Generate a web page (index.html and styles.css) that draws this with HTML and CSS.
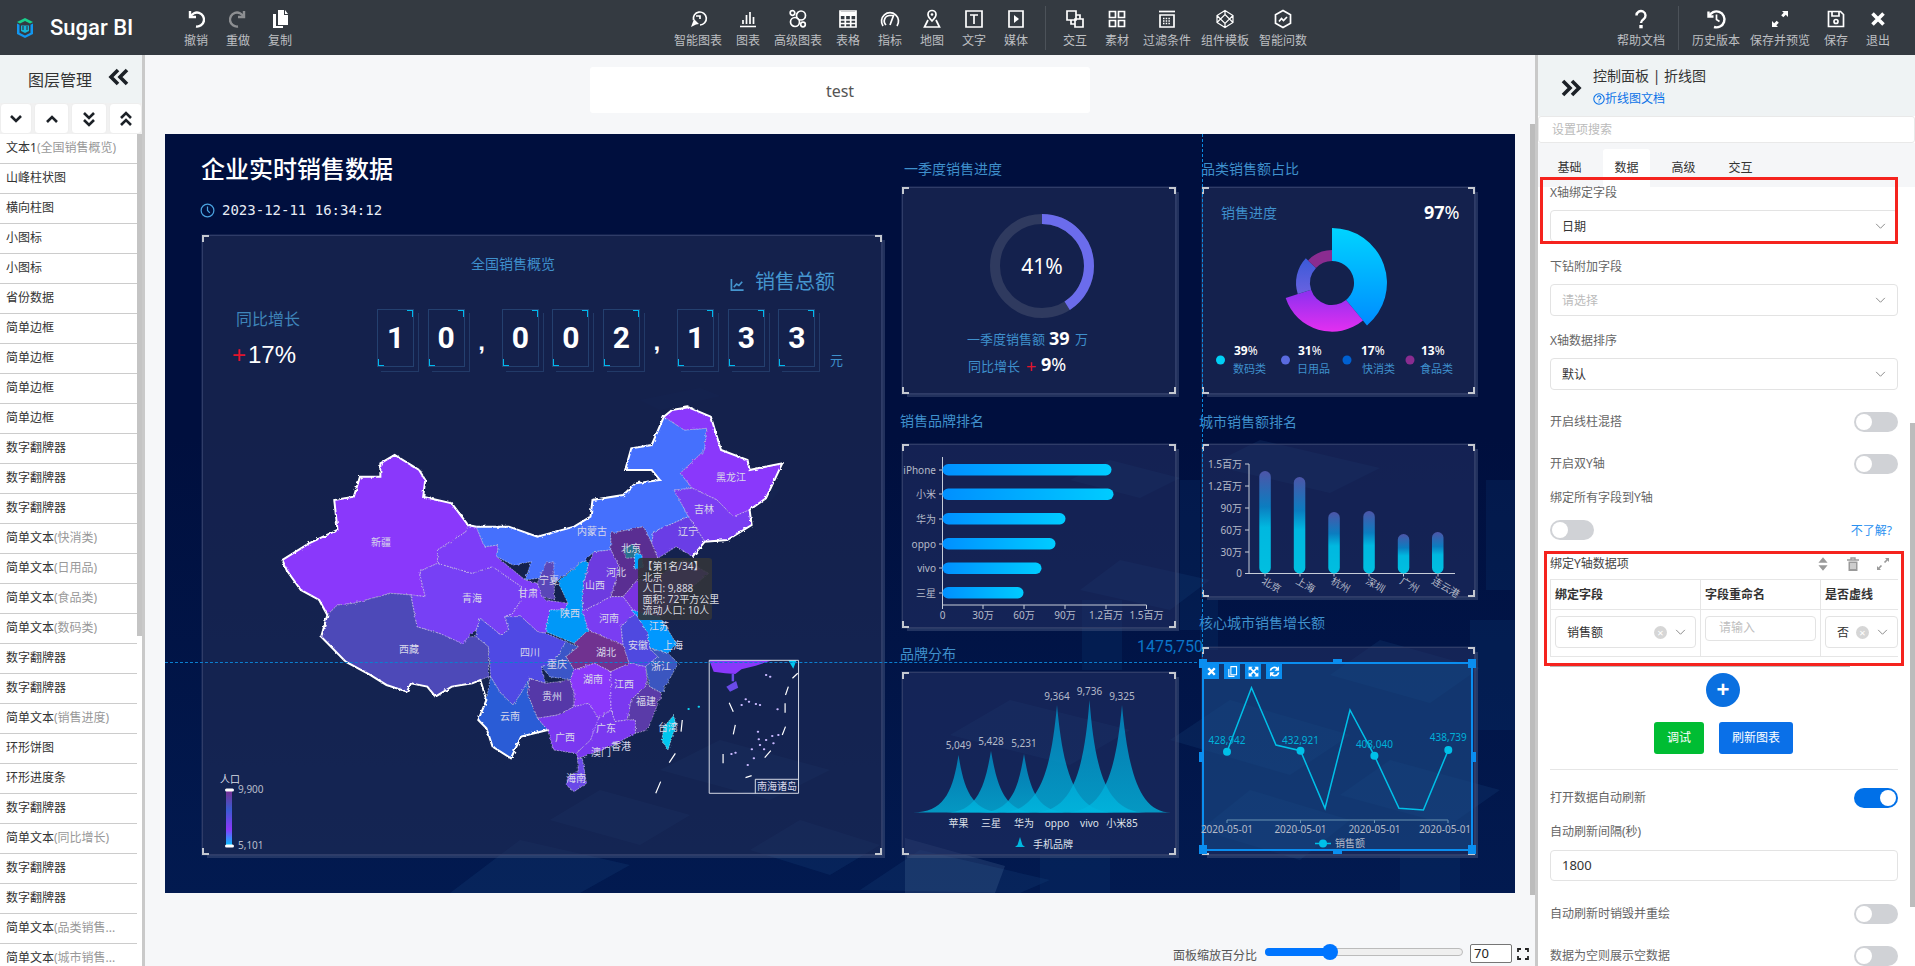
FILE: index.html
```html
<!DOCTYPE html>
<html lang="zh">
<head>
<meta charset="utf-8">
<title>Sugar BI</title>
<link rel="stylesheet" href="styles.css">
</head>
<body>
<header class="topbar">
  <div class="brand">
    <svg class="logo" viewBox="0 0 20 22"><path d="M10 1l8 4-3 1.600L10 4 5 6.600 2 5z" fill="#19d18c"/><path d="M2 6.500l2.500 1.300v8L10 18.500l5.500-2.700v-8L18 6.500v10.500L10 21 2 17z" fill="#1296f0"/><path d="M6 8.500h8v5.500l-4 2-4-2z" fill="#16b4d8"/><path d="M8 9v4M12 9v4" stroke="#343a40" stroke-width="1.200"/></svg>
    <span class="brand-name">Sugar BI</span>
  </div>
  <div class="tools">
    <div class="tool"><svg class="ti" viewBox="0 0 20 20"><path d="M4 2v6h6" class="st"/><path d="M4.500 8A7 7 0 1 1 10 17.500" class="st"/></svg><span>撤销</span></div>
    <div class="tool off"><svg class="ti" viewBox="0 0 20 20"><path d="M16 2v6h-6" class="st"/><path d="M15.500 8A7 7 0 1 0 10 17.500" class="st"/></svg><span>重做</span></div>
    <div class="tool"><svg class="ti" viewBox="0 0 20 20"><path d="M8 1h6v5h4v10H8zM15 1l3 4h-3z" class="fl"/><path d="M6 5H3v14h10v-2H6z" class="fl"/></svg><span>复制</span></div>
  </div>
  <div class="tools tools-mid">
    <div class="tool"><svg class="ti" viewBox="0 0 20 20"><path d="M5.500 11A6.500 6.500 0 1 1 12 16" class="sm"/><path d="M3 18l3-8 5 5-3 .5z" class="fl"/><path d="M8 7h4v3" class="sm"/></svg><span>智能图表</span></div>
    <div class="tool"><svg class="ti" viewBox="0 0 20 20"><path d="M2 17.500h16M5 15v-4M8.500 15V6M12 15V3M15.500 15V8" class="sm"/></svg><span>图表</span></div>
    <div class="tool"><svg class="ti" viewBox="0 0 20 20"><circle cx="4.500" cy="4" r="2.300" class="sm"/><circle cx="15" cy="15.500" r="2.300" class="sm"/><circle cx="7" cy="13" r="4.500" class="sm"/><circle cx="13" cy="6.500" r="4.500" class="sm"/></svg><span>高级图表</span></div>
    <div class="tool"><svg class="ti" viewBox="0 0 20 20"><path d="M2 2h16v16H2z" class="sm"/><path d="M2 3h16v4H2z" class="fl"/><path d="M2 11h16M2 14.500h16M7.300 7v11M12.700 7v11" class="sm"/></svg><span>表格</span></div>
    <div class="tool"><svg class="ti" viewBox="0 0 20 20"><path d="M3 17A8.500 8.500 0 1 1 17 17" class="sm"/><path d="M6 16A5.500 5.500 0 0 1 10 6.500h3.500L10 16" class="sm"/></svg><span>指标</span></div>
    <div class="tool"><svg class="ti" viewBox="0 0 20 20"><path d="M10 12S6 8 6 5.500a4 4 0 0 1 8 0C14 8 10 12 10 12z" class="sm"/><circle cx="10" cy="5.500" r="1.300" class="fl"/><path d="M6 11l-3.500 7h15L14 11" class="sm"/></svg><span>地图</span></div>
    <div class="tool"><svg class="ti" viewBox="0 0 20 20"><path d="M2 2h16v16H2z" class="sm"/><path d="M6 6h8M10 6v9" class="sm"/></svg><span>文字</span></div>
    <div class="tool"><svg class="ti" viewBox="0 0 20 20"><path d="M3 2h14v16H3z" class="sm"/><path d="M8 6l5 4-5 4z" class="fl"/></svg><span>媒体</span></div>
    <i class="divider"></i>
    <div class="tool"><svg class="ti" viewBox="0 0 20 20"><path d="M2 2h9v9H2zM10 10h8v8h-8z" class="sm"/><path d="M6 11v4h4M11 6h4v4" class="sm"/></svg><span>交互</span></div>
    <div class="tool"><svg class="ti" viewBox="0 0 20 20"><path d="M2.500 2.500h6v6h-6zM11.500 2.500h6v6h-6zM2.500 11.500h6v6h-6zM11.500 11.500h6v6h-6z" class="sm"/></svg><span>素材</span></div>
    <div class="tool"><svg class="ti" viewBox="0 0 20 20"><path d="M2 2.500h16" class="sm"/><path d="M3 6h14v12H3z" class="sm"/><path d="M6 9.500h8M6 12h8M6 14.500h8" class="dot"/></svg><span>过滤条件</span></div>
    <div class="tool"><svg class="ti" viewBox="0 0 20 20"><path d="M10 1.500l8 5v7l-8 5-8-5v-7zM10 5.500l4.500 4.500L10 14.500 5.500 10zM10 1.500v4M10 14.500v4M2 6.500L5.500 10 2 13.500M18 6.500L14.500 10l3.500 3.500" class="thin"/></svg><span>组件模板</span></div>
    <div class="tool"><svg class="ti" viewBox="0 0 20 20"><path d="M10 1.500l7.500 4.300v8.400L10 18.500l-7.500-4.300V5.800z" class="sm"/><path d="M6 12.500l2.500-3 2 2L14 8" class="sm"/></svg><span>智能问数</span></div>
  </div>
  <div class="tools tools-right">
    <div class="tool"><svg class="ti" viewBox="0 0 20 20"><path d="M5.500 6.500a4.500 4.500 0 1 1 7 3.700c-1.800 1.200-2.500 2-2.500 3.800" class="st"/><path d="M8.300 16h3.400v3.300H8.300z" class="fl"/></svg><span>帮助文档</span></div>
    <i class="divider"></i>
    <div class="tool"><svg class="ti" viewBox="0 0 20 20"><path d="M2.500 2.500v5h5" class="st"/><path d="M3 7.500A8 8 0 1 1 8 18" class="st"/><path d="M10.500 5.500v5l3 2" class="sm"/></svg><span>历史版本</span></div>
    <div class="tool"><svg class="ti" viewBox="0 0 20 20"><path d="M12 2h6v6l-2.200-2.200-2.500 2.500-2.100-2.100 2.500-2.500zM8 18H2v-6l2.200 2.200 2.500-2.500 2.100 2.100-2.500 2.500z" class="fl"/></svg><span>保存并预览</span></div>
    <div class="tool"><svg class="ti" viewBox="0 0 20 20"><path d="M2.500 2.500h12l3 3v12h-15z" class="sm"/><path d="M6 3v4h7V3" class="sm"/><circle cx="10" cy="12.500" r="2" class="sm"/></svg><span>保存</span></div>
    <div class="tool"><svg class="ti" viewBox="0 0 20 20"><path d="M4.500 4.500l11 11M15.500 4.500l-11 11" class="xl"/></svg><span>退出</span></div>
  </div>
</header>

<main class="workspace">
  <aside class="layers">
    <div class="layers-head"><span>图层管理</span><svg class="dbl" viewBox="0 0 22 18"><path d="M10 2L3 9l7 7M19 2l-7 7 7 7" class="chev"/></svg></div>
    <div class="layer-btns">
      <button class="lb b1"><svg viewBox="0 0 16 16"><path d="M3 5l5 5 5-5" class="chev2"/></svg></button>
      <button class="lb b2"><svg viewBox="0 0 16 16"><path d="M3 11l5-5 5 5" class="chev2"/></svg></button>
      <button class="lb b3"><svg viewBox="0 0 16 16"><path d="M3 2l5 5 5-5M3 9l5 5 5-5" class="chev2"/></svg></button>
      <button class="lb b4"><svg viewBox="0 0 16 16"><path d="M3 7l5-5 5 5M3 14l5-5 5 5" class="chev2"/></svg></button>
    </div>
    <div class="layer-list">
      <div class="layer">文本1<em>(全国销售概览)</em></div>
      <div class="layer">山峰柱状图</div>
      <div class="layer">横向柱图</div>
      <div class="layer">小图标</div>
      <div class="layer">小图标</div>
      <div class="layer">省份数据</div>
      <div class="layer">简单边框</div>
      <div class="layer">简单边框</div>
      <div class="layer">简单边框</div>
      <div class="layer">简单边框</div>
      <div class="layer">数字翻牌器</div>
      <div class="layer">数字翻牌器</div>
      <div class="layer">数字翻牌器</div>
      <div class="layer">简单文本<em>(快消类)</em></div>
      <div class="layer">简单文本<em>(日用品)</em></div>
      <div class="layer">简单文本<em>(食品类)</em></div>
      <div class="layer">简单文本<em>(数码类)</em></div>
      <div class="layer">数字翻牌器</div>
      <div class="layer">数字翻牌器</div>
      <div class="layer">简单文本<em>(销售进度)</em></div>
      <div class="layer">环形饼图</div>
      <div class="layer">环形进度条</div>
      <div class="layer">数字翻牌器</div>
      <div class="layer">简单文本<em>(同比增长)</em></div>
      <div class="layer">数字翻牌器</div>
      <div class="layer">数字翻牌器</div>
      <div class="layer">简单文本<em>(品类销售...</em></div>
      <div class="layer">简单文本<em>(城市销售...</em></div>
      <i class="layer-scroll"></i>
    </div>
  </aside>

  <section class="stage">
    <div class="page-title">test</div>
    <div class="canvas">
      <svg class="city" viewBox="165 134 1350 759" preserveAspectRatio="none">
        <g class="blk">
          <path d="M860 890l60-40 130 30-30 13zM1010 700l120 30-60 35-120-30zM720 740l110 30-60 30-110-30zM600 790l90 25-50 30-90-25zM520 840l110 25-50 28H450zM800 820l80 25-50 30-80-25z"/>
          <path d="M1120 560l90 20-40 30-90-20zM1230 700l120 35-60 40-120-35zM1250 790l100 30-50 40-100-30zM1380 640l100 28-50 35-100-28zM1390 760l110 30-50 35-110-30zM1260 440l120 28-50 25-120-28zM1110 460l70 18-40 20-70-18z"/>
          <path d="M905 838l100 28-10 27H905z" class="pale"/>
          <path d="M1486 480h29v110h-29zM1470 620h45v110h-45zM1082 600h40v70h-40zM1180 480h20v150h-20zM1200 600h18v50h-18zM1400 850h60v43h-60zM1040 850h70v43h-70z" class="tower"/>
          <path d="M700 470l80 20-10 12-80-20zM640 400l60-12 20 8-60 14z" class="faint"/>
        </g>
      </svg>

      <h1 class="board-title">企业实时销售数据</h1>
      <div class="board-time"><svg viewBox="0 0 16 16"><circle cx="8" cy="8" r="6.800"/><path d="M8 3.800V8l2.500 2.600"/></svg>2023-12-11 16:34:12</div>

      <div class="panel p-main">
        <svg class="chart" viewBox="202 235 680 620">
          <defs>
            <filter id="rough" x="-5%" y="-5%" width="110%" height="110%"><feTurbulence type="fractalNoise" baseFrequency="0.09" numOctaves="3" seed="3"/><feDisplacementMap in="SourceGraphic" scale="8"/></filter>
            <linearGradient id="vm" x1="0" y1="0" x2="0" y2="1"><stop offset="0" stop-color="#7a2f92"/><stop offset=".35" stop-color="#3a5ad0"/><stop offset=".7" stop-color="#8a38fb"/><stop offset="1" stop-color="#00c8ff"/></linearGradient>
          </defs>
          <g transform="translate(260 400) scale(.408 .3333)">
            <g filter="url(#rough)">
              <g class="prov">
                <path fill="#8a38fb" d="M55 480L120 430 190 390 182 300 230 290 245 230 295 230 295 190 330 165 390 210 405 240 400 290 470 310 510 375 505 395 435 450 435 490 390 515 405 590 370 585 320 580 230 610 190 615 165 645 145 600 100 570 65 510Z"/>
                <path fill="#4e49b8" d="M165 645L190 615 230 610 320 580 370 585 385 680 440 700 490 710 530 710 560 740 560 830 540 840 520 850 470 860 430 890 410 860 370 850 360 875 310 855 270 825 210 785 150 710Z"/>
                <path fill="#7740f5" d="M390 515L435 490 520 520 570 500 640 560 640 600 620 640 600 650 610 690 590 705 540 655 530 690 495 730 440 700 385 680 370 585 405 590Z"/>
                <path fill="#7d3df8" d="M435 450L505 395 510 375 530 380 550 440 585 435 580 470 650 540 680 550 700 600 755 610 745 630 710 630 700 700 680 695 640 650 600 650 620 640 640 600 640 560 570 500 520 520 435 490Z"/>
                <path fill="#4570fd" d="M530 380L610 380 680 410 770 380 810 350 815 300 890 285 920 250 980 240 960 210 895 210 910 145 960 135 990 50 1040 90 1095 85 1090 150 1030 220 1060 265 1015 270 1050 350 965 395 960 430 940 380 860 400 860 450 820 455 795 480 725 545 680 535 650 540 665 485 620 495 580 470 585 435 550 440Z"/>
                <path fill="#8a38fb" d="M990 50L1010 30 1050 22 1105 50 1130 150 1195 180 1200 210 1280 190 1240 295 1200 330 1160 350 1120 300 1060 265 1030 220 1090 150 1095 85 1040 90Z"/>
                <path fill="#7a3df2" d="M1060 265L1120 300 1160 350 1200 330 1205 375 1145 420 1090 425 1050 350 1015 270Z"/>
                <path fill="#6b3ce6" d="M1050 350L1090 425 1060 470 1020 440 975 475 960 430 965 395Z"/>
                <path fill="#5a2f92" d="M860 400L940 380 960 430 975 475 925 540 890 590 860 590 880 500 860 450Z"/>
                <path fill="#2c6f8e" d="M892 448L912 432 932 450 925 472 897 475Z"/>
                <path fill="#00a0ff" d="M918 462L936 462 938 500 918 508Z"/>
                <path fill="#6d3be0" d="M820 455L860 450 880 500 860 590 790 635 790 570 805 490Z"/>
                <path fill="#7a30e0" d="M890 590L925 540 975 530 1040 480 1100 520 1030 590 985 650 920 640Z"/>
                <path fill="#0098f8" d="M795 480L805 490 790 570 790 635 805 690 770 730 700 695 710 630 745 630 755 610 730 545Z"/>
                <path fill="#5a46b8" d="M700 490L720 485 722 600 690 590 680 548Z"/>
                <path fill="#7a3df2" d="M790 635L860 590 890 590 920 640 885 680 890 735 850 715 805 690Z"/>
                <path fill="#703090" d="M770 730L805 690 850 715 890 735 905 790 860 815 820 790 770 810 750 770 780 740Z"/>
                <path fill="#0098ff" d="M910 630L980 650 1020 730 1000 760 955 745 950 700 935 670Z"/>
                <path fill="#5048e0" d="M920 640L935 670 950 700 955 745 975 770 945 800 905 790 890 735 885 680Z"/>
                <path fill="#3a56c0" d="M955 745L1000 760 1025 790 985 880 955 860 945 800 975 770Z"/>
                <path fill="#4f48e4" d="M530 690L540 655 590 705 610 690 600 650 640 650 680 695 700 700 750 725 720 790 690 800 700 850 660 835 640 880 620 915 590 880 565 830 560 740 530 710Z"/>
                <path fill="#3b57c8" d="M750 725L780 740 750 770 770 810 760 840 710 830 690 800 720 790Z"/>
                <path fill="#5538a8" d="M660 835L700 850 760 840 770 880 770 920 730 945 680 955 655 880Z"/>
                <path fill="#2a5cd6" d="M565 830L590 880 620 915 640 880 660 835 655 880 680 955 705 990 640 1010 615 1075 570 1040 555 985 535 960 555 900Z"/>
                <path fill="#8a38fb" d="M770 810L820 790 860 815 860 930 830 955 805 910 770 920 770 880 760 840Z"/>
                <path fill="#7a38f0" d="M860 815L905 790 945 800 950 850 910 900 900 960 870 965 860 930Z"/>
                <path fill="#5a3aa8" d="M950 850L955 860 985 880 950 990 920 1000 920 960 900 960 910 900Z"/>
                <path fill="#7a38f0" d="M830 955L860 930 870 965 900 960 920 960 920 1000 850 1045 780 1075 775 1060 810 1020 825 960Z"/>
                <path fill="#7a38f0" d="M680 955L730 945 770 920 805 910 830 955 810 1020 775 1060 720 1050 705 990Z"/>
                <path fill="#6a4ae8" d="M778 1075L790 1075 795 1112 800 1150 770 1175 750 1155 755 1130 780 1112Z"/>
                <path fill="#00c8f0" d="M1015 945L1020 970 1000 1050 985 1020 990 980Z"/>
              </g>
              <path class="outline" d="M530 380L610 380 680 410 770 380 810 350 815 300 890 285 920 250 980 240 960 210 895 210 910 145 960 135 990 50 1010 30 1050 22 1105 50 1130 150 1195 180 1200 210 1280 190 1240 295 1200 330 1205 375 1145 420 1090 425 1060 470"/>
              <path class="outline" d="M530 380L510 375 470 310 400 290 405 240 390 210 330 165 295 190 295 230 245 230 230 290 182 300 190 390 120 430 55 480 65 510 100 570 145 600 165 645 150 710 210 785 270 825 310 855 360 875 370 850 410 860 430 890 470 860 520 850 540 840 555 900 535 960 555 985 570 1040 615 1075 640 1010 705 990"/>
            </g>
            <path class="dash" d="M1035 960l-3 35M1018 1060l-15 28M982 1145l-12 35"/>
            <path class="dots cy" d="M1050 927h1M1075 920h1"/>
            <path d="M1101 781H1255L1215 797 1180 808 1165 822 1140 820 1112 815Z" fill="#8a38fb"/>
            <path d="M1295 781h20l-8 25z" fill="#00c8f0"/>
            <path d="M1156 822h6v22h-6z" fill="#6a4ae8"/>
            <path d="M1143 860l24-17 5 20-20 12z" fill="#6a4ae8"/>
            <path class="dash" d="M1150 908l10 27M1295 860l-7 25M1287 910v28M1165 975l-5 28M1288 980l-8 25M1135 1062v28M1252 1052l-15 21M1318 820l-13 15M1190 1133l15-6"/>
            <path class="dots" d="M1180 915h1M1190 898h1M1198 905h1M1215 912h1M1225 915h1M1240 825h1M1250 830h1M1268 928h1M1220 995h1M1222 1018h1M1240 1020h1M1255 1008h1M1270 1005h1M1205 1048h1M1235 1048h1M1195 1095h1M1210 1075h1M1165 1058h1M1155 1062h1M1258 1030h1M1225 1035h1"/>
            <path class="nan-box" d="M1101 781h219v399h-219zM1214 1180v-42h106"/>
          </g>
          <g class="map-labels">
            <text x="381" y="546">新疆</text><text x="472" y="602">青海</text><text x="409" y="653">西藏</text><text x="592" y="535">内蒙古</text><text x="731" y="481">黑龙江</text><text x="704" y="513">吉林</text><text x="688" y="535">辽宁</text><text x="631" y="552">北京</text><text x="616" y="576">河北</text><text x="595" y="589">山西</text><text x="549" y="584">宁夏</text><text x="528" y="597">甘肃</text><text x="570" y="617">陕西</text><text x="609" y="622">河南</text><text x="659" y="630">江苏</text><text x="638" y="649">安徽</text><text x="673" y="649">上海</text><text x="530" y="656">四川</text><text x="606" y="656">湖北</text><text x="557" y="668">重庆</text><text x="661" y="670">浙江</text><text x="593" y="683">湖南</text><text x="624" y="688">江西</text><text x="552" y="700">贵州</text><text x="646" y="705">福建</text><text x="510" y="720">云南</text><text x="668" y="731">台湾</text><text x="606" y="732">广东</text><text x="565" y="741">广西</text><text x="621" y="750">香港</text><text x="601" y="756">澳门</text><text x="576" y="782">海南</text><text x="777" y="790">南海诸岛</text>
          </g>
          <text class="lg" x="230" y="783">人口</text>
          <rect x="226" y="790" width="6" height="56" fill="url(#vm)"/>
          <rect x="225" y="788.500" width="9" height="3" rx="1.500" class="hdl"/><rect x="225" y="844.500" width="9" height="3" rx="1.500" class="hdl"/>
          <text class="lg start" x="238" y="790">9,900</text><text class="lg start" x="238" y="846">5,101</text>
        </svg>
        <div class="maptip">【第1名/34】<br>北京<br>人口: 9,888<br>面积: 72平方公里<br>流动人口: 10人</div>
      </div>

      <div class="ov-title">全国销售概览</div>
      <div class="ov-total"><svg viewBox="0 0 16 16"><path d="M1.500 2v12h13M4 11l3-3.500 2.500 1.500L13 5" /></svg>销售总额</div>
      <div class="ov-yoy">同比增长</div>
      <div class="ov-pct"><b class="plus">+</b>17%</div>
      <div class="digits">
        <span class="d">1</span><span class="d">0</span><span class="cm">,</span><span class="d">0</span><span class="d">0</span><span class="d">2</span><span class="cm">,</span><span class="d">1</span><span class="d">3</span><span class="d">3</span>
      </div>
      <div class="ov-unit">元</div>

      <div class="ttl t1">一季度销售进度</div>
      <div class="ttl t2">品类销售额占比</div>
      <div class="ttl t3">销售品牌排名</div>
      <div class="ttl t4">城市销售额排名</div>
      <div class="ttl t5">核心城市销售增长额</div>
      <div class="ttl t6">品牌分布</div>

      <div class="panel p-a">
        <svg class="chart" viewBox="902 187 274 207">
          <circle cx="1042" cy="266" r="47" class="ring-bg"/>
          <circle cx="1042" cy="266" r="47" class="ring-fg" pathLength="100" stroke-dasharray="41 59" transform="rotate(-90 1042 266)"/>
          <text x="1042" y="274" class="ring-txt">41%</text>
          <text x="967" y="344" class="bl s13">一季度销售额</text>
          <text x="1049" y="345" class="wh b18">39</text>
          <text x="1075" y="344" class="bl s13">万</text>
          <text x="968" y="371" class="bl s13">同比增长</text>
          <text x="1026" y="373" class="red">+</text>
          <text x="1041" y="371" class="wh b18">9<tspan class="thinp">%</tspan></text>
        </svg>
      </div>

      <div class="panel p-b">
        <svg class="chart" viewBox="1202 187 273 207">
          <defs>
            <linearGradient id="s1" x1="0" y1="0" x2="0" y2="1"><stop offset="0" stop-color="#00d4ff"/><stop offset="1" stop-color="#008cff"/></linearGradient>
            <linearGradient id="s2" x1="0" y1="0" x2="0" y2="1"><stop offset="0" stop-color="#8a30f0"/><stop offset="1" stop-color="#e32ff0"/></linearGradient>
            <linearGradient id="s3" x1="0" y1="0" x2="0" y2="1"><stop offset="0" stop-color="#3a5ad8"/><stop offset="1" stop-color="#6a62e0"/></linearGradient>
          </defs>
          <text x="1221" y="218" class="bl s14">销售进度</text>
          <text x="1424" y="219" class="wh b18">97<tspan class="thinp">%</tspan></text>
          <path fill="url(#s1)" d="M1332 228A55 55 0 0 1 1367 325.400L1346 300A22 22 0 0 0 1332 261Z"/>
          <path fill="url(#s2)" d="M1363 320.500A48.700 48.700 0 0 1 1285.700 298L1311.100 289.800A22 22 0 0 0 1346 300Z"/>
          <path fill="url(#s3)" d="M1297.800 294.100A36 36 0 0 1 1305.800 258.300L1316 268A22 22 0 0 0 1311.100 289.800Z"/>
          <path fill="#8a2c90" d="M1308 260.400A33 33 0 0 1 1332 250L1332 261A22 22 0 0 0 1316 268Z"/>
          <circle cx="1220.500" cy="360" r="4.500" fill="#00d0f5"/><circle cx="1285.500" cy="360" r="4.500" fill="#5a6be0"/><circle cx="1347" cy="360" r="4.500" fill="#0060d0"/><circle cx="1410" cy="360" r="4.500" fill="#8a2c90"/>
          <text x="1234" y="355" class="wh b12">39<tspan class="thinp">%</tspan></text><text x="1298" y="355" class="wh b12">31<tspan class="thinp">%</tspan></text><text x="1361" y="355" class="wh b12">17<tspan class="thinp">%</tspan></text><text x="1421" y="355" class="wh b12">13<tspan class="thinp">%</tspan></text>
          <text x="1233" y="373" class="bl s11">数码类</text><text x="1297" y="373" class="bl s11">日用品</text><text x="1362" y="373" class="bl s11">快消类</text><text x="1420" y="373" class="bl s11">食品类</text>
        </svg>
      </div>

      <div class="panel p-c">
        <svg class="chart" viewBox="902 444 274 184">
          <defs><linearGradient id="hb"><stop offset="0" stop-color="#0090ff"/><stop offset="1" stop-color="#00ccff"/></linearGradient></defs>
          <path class="axis" d="M942.500 457V605H1146.500M942.500 605v4M983 605v4M1024 605v4M1065 605v4M1106 605v4M1146.500 605v4M939 470h3.500M939 494h3.500M939 519h3.500M939 544h3.500M939 568h3.500M939 593h3.500"/>
          <rect x="942.500" y="464" width="169" height="11.500" rx="5.700" fill="url(#hb)"/><rect x="942.500" y="488.500" width="171" height="11.500" rx="5.700" fill="url(#hb)"/><rect x="942.500" y="513" width="123" height="11.500" rx="5.700" fill="url(#hb)"/><rect x="942.500" y="538" width="113" height="11.500" rx="5.700" fill="url(#hb)"/><rect x="942.500" y="562.500" width="99" height="11.500" rx="5.700" fill="url(#hb)"/><rect x="942.500" y="587" width="81" height="11.500" rx="5.700" fill="url(#hb)"/>
          <g class="ax-l end"><text x="936" y="473.500">iPhone</text><text x="936" y="498">小米</text><text x="936" y="523">华为</text><text x="936" y="547.500">oppo</text><text x="936" y="572">vivo</text><text x="936" y="596.500">三星</text></g>
          <g class="ax-l mid"><text x="942.500" y="619">0</text><text x="983" y="619">30万</text><text x="1024" y="619">60万</text><text x="1065" y="619">90万</text><text x="1106" y="619">1.2百万</text><text x="1146.500" y="619">1.5百万</text></g>
        </svg>
      </div>

      <div class="panel p-d">
        <svg class="chart" viewBox="1202 444 273 153">
          <defs><linearGradient id="vb" x1="0" y1="0" x2="0" y2="1"><stop offset="0" stop-color="#4d55a8"/><stop offset=".35" stop-color="#0b7dc0"/><stop offset=".55" stop-color="#00b8e0"/><stop offset="1" stop-color="#00bfe0"/></linearGradient></defs>
          <path class="axis" d="M1249 464V573.500H1455M1245 464h4M1245 486h4M1245 508h4M1245 530h4M1245 552h4M1245 573.500h4M1265 573.500v3M1300 573.500v3M1334 573.500v3M1369 573.500v3M1403.500 573.500v3M1438 573.500v3"/>
          <rect x="1259.300" y="471" width="11.500" height="102.500" rx="5.700" fill="url(#vb)"/><rect x="1293.800" y="477" width="11.500" height="96.500" rx="5.700" fill="url(#vb)"/><rect x="1328.300" y="512" width="11.500" height="61.500" rx="5.700" fill="url(#vb)"/><rect x="1363.300" y="511" width="11.500" height="62.500" rx="5.700" fill="url(#vb)"/><rect x="1397.800" y="534" width="11.500" height="39.500" rx="5.700" fill="url(#vb)"/><rect x="1432" y="532" width="11.500" height="41.500" rx="5.700" fill="url(#vb)"/>
          <g class="ax-l end"><text x="1242" y="468">1.5百万</text><text x="1242" y="490">1.2百万</text><text x="1242" y="512">90万</text><text x="1242" y="534">60万</text><text x="1242" y="556">30万</text><text x="1242" y="577">0</text></g>
          <g class="ax-l"><text transform="translate(1261 583) rotate(30)">北京</text><text transform="translate(1295 583) rotate(30)">上海</text><text transform="translate(1330 583) rotate(30)">杭州</text><text transform="translate(1365 583) rotate(30)">深圳</text><text transform="translate(1399 583) rotate(30)">广州</text><text transform="translate(1431 583) rotate(30)">连云港</text></g>
        </svg>
      </div>

      <div class="panel p-e">
        <svg class="chart" viewBox="902 672 274 183">
          <defs><linearGradient id="pk" x1="0" y1="0" x2="0" y2="1"><stop offset="0" stop-color="#0090c8"/><stop offset="1" stop-color="#00b8e0"/></linearGradient></defs>
          <g fill="url(#pk)" fill-opacity=".78">
            <path d="M913 812.500C945 812.500 953 790 958.500 755 964 790 972 812.500 1004 812.500Z"/>
            <path d="M946 812.500C978 812.500 985 785 991 751 997 785 1004 812.500 1036 812.500Z"/>
            <path d="M979 812.500C1011 812.500 1018 790 1024 754 1030 790 1037 812.500 1069 812.500Z"/>
            <path d="M1000 812.500C1040 812.500 1051 770 1057 705 1063 770 1074 812.500 1114 812.500Z"/>
            <path d="M1033 812.500C1073 812.500 1084 770 1089.500 700 1095 770 1106 812.500 1146 812.500Z"/>
            <path d="M1065 812.500C1105 812.500 1116 770 1122 705 1128 770 1139 812.500 1171 812.500Z"/>
          </g>
          <g class="ax-l mid">
            <text x="958.500" y="749">5,049</text><text x="991" y="745">5,428</text><text x="1024" y="747">5,231</text><text x="1057" y="700">9,364</text><text x="1089.500" y="695">9,736</text><text x="1122" y="700">9,325</text>
          </g>
          <g class="ax-l mid lite"><text x="958.500" y="827">苹果</text><text x="991" y="827">三星</text><text x="1024" y="827">华为</text><text x="1057" y="827">oppo</text><text x="1089.500" y="827">vivo</text><text x="1122" y="827">小米85</text></g>
          <path d="M1020 837l2.500 8 2.500 2h-10l2.500-2z" fill="#00b8e0"/>
          <text x="1033" y="848" class="ax-l lite">手机品牌</text>
        </svg>
      </div>

      <div class="panel p-f"></div>

      <i class="guide-h"></i><i class="guide-v"></i>
      <div class="guide-val">1475,750</div>

      <div class="selected">
        <svg class="chart" viewBox="1202 662 271 189">
          <path class="line" d="M1227 751.700L1251.500 687.700 1276 745 1300.500 750.700 1325 808.300 1350 710 1374.400 755.700 1399 808.300 1423.400 810 1448.300 750"/>
          <g class="pts"><circle cx="1227" cy="751.700" r="4"/><circle cx="1300.500" cy="750.700" r="4"/><circle cx="1374.400" cy="755.700" r="4"/><circle cx="1448.300" cy="750" r="4"/></g>
          <g class="pt-l"><text x="1227" y="744">428,942</text><text x="1300.500" y="744">432,921</text><text x="1374.400" y="748">408,040</text><text x="1448.300" y="741">438,739</text></g>
          <path class="axis dim" d="M1227 820H1448M1227 820v3M1300.500 820v3M1374.500 820v3M1448 820v3"/>
          <g class="ax-l mid"><text x="1227" y="833">2020-05-01</text><text x="1300.500" y="833">2020-05-01</text><text x="1374.500" y="833">2020-05-01</text><text x="1445" y="833">2020-05-01</text></g>
          <path class="line" d="M1315 843.500h16"/><circle cx="1323" cy="843.500" r="4" class="pt-leg"/>
          <text x="1335" y="847" class="ax-l">销售额</text>
        </svg>
        <div class="sel-tools">
          <span class="st-b"><svg viewBox="0 0 16 16"><path d="M4 4l8 8M12 4l-8 8" class="w3"/></svg></span>
          <span class="st-b"><svg viewBox="0 0 16 16"><path d="M6 2h7v10H6zM3.500 5v9h7" class="w1"/></svg></span>
          <span class="st-b"><svg viewBox="0 0 16 16"><path d="M3 3l10 10M13 3L3 13" class="w2"/><path d="M2 2h5L2 7zM14 2v5L9 2zM2 14V9l5 5zM14 14H9l5-5z" fill="#fff"/></svg></span>
          <span class="st-b"><svg viewBox="0 0 16 16"><path d="M3 7a5 5 0 0 1 9-2M13 9a5 5 0 0 1-9 2" class="w2"/><path d="M13.500 1.500V7H8zM2.500 14.500V9H8z" fill="#fff"/></svg></span>
        </div>
        <i class="h tl"></i><i class="h tm"></i><i class="h tr"></i><i class="h ml"></i><i class="h mr"></i><i class="h bl2"></i><i class="h bm"></i><i class="h br"></i>
      </div>
    </div>
    <div class="zoombar">
      <span class="zoom-label">面板缩放百分比</span>
      <div class="slider"><i class="slider-fill"></i><i class="slider-thumb"></i></div>
      <div class="zoom-input">70</div>
      <svg class="fs" viewBox="0 0 12 12"><path d="M1 4V1h3M8 1h3v3M11 8v3H8M4 11H1V8"/></svg>
    </div>
    <i class="stage-scroll"></i>
  </section>

  <aside class="props">
    <div class="props-head">
      <svg class="dbl2" viewBox="0 0 22 18"><path d="M3 2l7 7-7 7M12 2l7 7-7 7" class="chev"/></svg>
      <div class="props-head-text">
        <div class="props-title">控制面板 | 折线图</div>
        <div class="props-link"><svg viewBox="0 0 12 12"><circle cx="6" cy="6" r="5.200"/><path d="M4.300 4.600a1.800 1.800 0 1 1 2.500 1.700c-.6.300-.8.600-.8 1.200M6 8.600v1"/></svg>折线图文档</div>
      </div>
    </div>
    <div class="props-search">设置项搜索</div>
    <div class="tabs"><span class="tab">基础</span><span class="tab on">数据</span><span class="tab">高级</span><span class="tab">交互</span></div>
    <div class="form">
      <div class="f-label">X轴绑定字段</div>
      <div class="sel"><span>日期</span><svg class="caret" viewBox="0 0 12 8"><path d="M1 1l5 5 5-5"/></svg></div>
      <div class="f-label gap">下钻附加字段</div>
      <div class="sel ph"><span>请选择</span><svg class="caret" viewBox="0 0 12 8"><path d="M1 1l5 5 5-5"/></svg></div>
      <div class="f-label gap">X轴数据排序</div>
      <div class="sel"><span>默认</span><svg class="caret" viewBox="0 0 12 8"><path d="M1 1l5 5 5-5"/></svg></div>
      <div class="row r22"><span class="f-label">开启线柱混搭</span><i class="sw"></i></div>
      <div class="row r22"><span class="f-label">开启双Y轴</span><i class="sw"></i></div>
      <div class="f-label r15">绑定所有字段到Y轴</div>
      <div class="row r13"><i class="sw"></i><a class="know">不了解?</a></div>
      <div class="row y-title"><span class="f-label dark">绑定Y轴数据项</span>
        <span class="y-icons">
          <svg viewBox="0 0 10 14"><path d="M5 1l4 5H1zM5 13L1 8h8z" class="g-fill"/></svg>
          <svg viewBox="0 0 14 14"><path d="M1 3h12M5 3V1h4v2" class="g-st"/><path d="M2.500 4.500h9V14h-9z" class="g-fill"/><path d="M5 6v6M7 6v6M9 6v6" class="g-w"/></svg>
          <svg viewBox="0 0 14 14"><path d="M9 1h4v4l-1.400-1.400-2.500 2.500-1.200-1.200 2.500-2.500zM5 13H1V9l1.400 1.400 2.500-2.500 1.200 1.200-2.500 2.500z" class="g-fill"/></svg>
        </span>
      </div>
      <div class="ytable">
        <div class="th">绑定字段</div><div class="th">字段重命名</div><div class="th">是否虚线</div>
        <div class="td"><div class="sel sm c1"><span>销售额</span><i class="clr">×</i><svg class="caret" viewBox="0 0 12 8"><path d="M1 1l5 5 5-5"/></svg></div></div>
        <div class="td"><div class="inp">请输入</div></div>
        <div class="td"><div class="sel sm c3"><span>否</span><i class="clr">×</i><svg class="caret" viewBox="0 0 12 8"><path d="M1 1l5 5 5-5"/></svg></div></div>
      </div>
      <div class="y-scroll"></div>
      <div class="plus-btn">+</div>
      <div class="btns"><span class="btn green">调试</span><span class="btn blue">刷新图表</span></div>
      <hr class="sep">
      <div class="row"><span class="f-label">打开数据自动刷新</span><i class="sw on"></i></div>
      <div class="f-label r15 mb9">自动刷新间隔(秒)</div>
      <div class="num">1800</div>
      <div class="row r23"><span class="f-label">自动刷新时销毁并重绘</span><i class="sw"></i></div>
      <div class="row r22"><span class="f-label">数据为空则展示空数据</span><i class="sw"></i></div>
    </div>
    <i class="redbox box1"></i><i class="redbox box2"></i>
    <i class="props-scroll"></i>
  </aside>
</main>
</body>
</html>
```
FILE: styles.css
```css
* { box-sizing: border-box; }
html, body { margin: 0; height: 100%; }
body {
  width: 1915px; height: 966px; overflow: hidden;
  display: flex; flex-direction: column;
  font-family: "Noto Sans", "Noto Sans CJK SC", sans-serif;
  font-size: 12px; color: #333; background: #f6f7f9;
}
i { font-style: normal; display: block; }

/* top bar */
.topbar { height: 55px; flex: none; background: #343a41; display: flex; align-items: stretch; color: #bdbfc2; }
.brand { width: 175px; flex: none; display: flex; align-items: center; padding-left: 15px; }
.logo { width: 20px; height: 22px; }
.brand-name { margin-left: 15px; font: 500 22px/1 Roboto, sans-serif; color: #fff; }
.tools { display: flex; align-items: center; }
.tools-mid { margin-left: 368px; }
.tools-right { margin-left: auto; padding-right: 16px; }
.tool { min-width: 42px; padding: 9px 5px 0; height: 55px; display: flex; flex-direction: column; align-items: center; justify-content: flex-start; line-height: 16px; white-space: nowrap; }
.ti { width: 20px; height: 20px; margin-bottom: 4px; color: #fff; overflow: visible; }
.tool.off .ti { color: #8d8f92; }
.divider { width: 1px; height: 44px; background: #4c5259; margin: 0 8px; }
.st, .sm, .xl, .thin, .dot { fill: none; stroke: currentColor; }
.st { stroke-width: 2.400; }
.sm { stroke-width: 1.700; }
.thin { stroke-width: 1.200; }
.xl { stroke-width: 3.600; }
.dot { stroke-width: 1.400; stroke-dasharray: 1.500 1.200; }
.fl { fill: currentColor; }

/* workspace */
.workspace { flex: 1; display: flex; min-height: 0; }

/* layers */
.layers { width: 145px; flex: none; border-right: 3px solid #c9c9c9; background: #fff; display: flex; flex-direction: column; overflow: hidden; }
.layers-head { height: 48px; flex: none; background: #eff3f4; display: flex; align-items: center; padding-left: 28px; font-size: 16px; color: #333; position: relative; }
.dbl { width: 22px; height: 18px; margin-left: 16px; margin-top: -4px; }
.chev { fill: none; stroke: #1c2127; stroke-width: 3.600; }
.layer-btns { height: 31px; flex: none; display: flex; gap: 2px; background: #f1f1f1; }
.lb { height: 31px; padding: 0; border: 1px solid #eee; border-radius: 4px; background: #fff; display: flex; align-items: center; justify-content: center; }
.lb svg { width: 16px; height: 16px; }
.b1 { width: 32px; } .b2 { width: 35px; } .b3 { width: 36px; } .b4 { width: 33px; }
.chev2 { fill: none; stroke: #1c2127; stroke-width: 2.600; }
.layer-list { flex: 1; position: relative; overflow: hidden; }
.layer { height: 30px; border-bottom: 1px solid #ccc; padding-left: 6px; line-height: 28px; color: #333; white-space: nowrap; margin-right: 5px; }
.layer em { font-style: normal; color: #999; }
.layer-scroll { position: absolute; right: 0; top: 0; width: 5px; height: 502px; background: #c4c4c4; }

/* stage */
.stage { flex: 1; min-width: 0; position: relative; display: flex; flex-direction: column; align-items: center; }
.stage-scroll { position: absolute; right: 0; top: 69px; width: 5px; height: 771px; background: #bcbcbc; }
.page-title { width: 500px; height: 46px; margin-top: 12px; background: #fff; border-radius: 3px; text-align: center; font-size: 16px; line-height: 49px; color: #555; flex: none; }
.canvas { width: 1350px; height: 759px; margin-top: 21px; flex: none; position: relative; overflow: hidden; background: linear-gradient(180deg, #000f3e 0, #000f3e 40%, #021a50 100%); color: #fff; }
.zoombar { align-self: flex-end; margin-top: 51px; height: 19px; display: flex; align-items: center; padding-right: 6px; font-size: 12px; color: #555; }
.zoom-label { margin-right: 8px; position: relative; top: 1px; }
.slider { width: 198px; height: 8px; background: #efefef; border: 1px solid #bbb; border-radius: 4px; position: relative; top: -2px; }
.slider-fill { position: absolute; left: -1px; top: -1px; height: 8px; width: 65px; background: #0075ff; border-radius: 4px 0 0 4px; }
.slider-thumb { position: absolute; left: 56px; top: -5px; width: 16px; height: 16px; border-radius: 50%; background: #0075ff; }
.zoom-input { width: 42px; height: 19px; margin-left: 7px; border: 1px solid #767676; border-radius: 2px; background: #fff; font-size: 13px; line-height: 17px; padding-left: 3px; color: #222; }
.fs { width: 12px; height: 12px; margin-left: 5px; fill: none; stroke: #222; stroke-width: 1.800; }

/* canvas */
.city { position: absolute; inset: 0; width: 100%; height: 100%; }
.blk path { fill: #2f6aa8; fill-opacity: .13; }
.blk .pale { fill: #7aa0c8; fill-opacity: .16; }
.blk .tower { fill: #0d3f7c; fill-opacity: .2; }
.blk .faint { fill-opacity: .05; }
.board-title { position: absolute; left: 36px; top: 18px; margin: 0; font-size: 24px; line-height: 34px; font-weight: 500; color: #fff; }
.board-time { position: absolute; left: 35px; top: 67px; display: flex; align-items: center; gap: 7px; font: 14px/18px "DejaVu Sans Mono", monospace; color: #e8edf6; }
.board-time svg { width: 15px; height: 15px; fill: none; stroke: #4aa3e0; stroke-width: 1.300; }
.panel { position: absolute; background: rgba(36, 50, 100, .55); box-shadow: inset 0 0 0 1px #2f3c68, 0 0 0 1px rgba(70, 85, 125, .25), 4px 4px 0 -1px rgba(75, 90, 130, .45); }
.panel::after { content: ""; position: absolute; inset: 0; pointer-events: none;
  background:
    linear-gradient(#c4c8d0, #c4c8d0) left top / 7px 2px no-repeat, linear-gradient(#c4c8d0, #c4c8d0) left top / 2px 7px no-repeat,
    linear-gradient(#c4c8d0, #c4c8d0) right top / 7px 2px no-repeat, linear-gradient(#c4c8d0, #c4c8d0) right top / 2px 7px no-repeat,
    linear-gradient(#c4c8d0, #c4c8d0) left bottom / 7px 2px no-repeat, linear-gradient(#c4c8d0, #c4c8d0) left bottom / 2px 7px no-repeat,
    linear-gradient(#c4c8d0, #c4c8d0) right bottom / 7px 2px no-repeat, linear-gradient(#c4c8d0, #c4c8d0) right bottom / 2px 7px no-repeat; }
.p-main { left: 37px; top: 101px; width: 680px; height: 620px; background: rgba(33, 45, 87, .6); }
.p-a { left: 737px; top: 53px; width: 274px; height: 207px; background: #14214d; }
.p-b { left: 1037px; top: 53px; width: 273px; height: 207px; background: #14214d; }
.p-c { left: 737px; top: 310px; width: 274px; height: 184px; }
.p-d { left: 1037px; top: 310px; width: 273px; height: 153px; }
.p-e { left: 737px; top: 538px; width: 274px; height: 183px; }
.p-f { left: 1037px; top: 513px; width: 273px; height: 208px; }
.chart { position: absolute; inset: 0; width: 100%; height: 100%; overflow: visible; }
.chart text { font-family: "Noto Sans", "Noto Sans CJK SC", sans-serif; }

.prov path { stroke: rgba(255, 255, 255, .75); stroke-width: .6; stroke-dasharray: 2 1; vector-effect: non-scaling-stroke; }
.outline { fill: none; stroke: #fff; stroke-width: 2; vector-effect: non-scaling-stroke; }
.dash { fill: none; stroke: #fff; stroke-width: 1.200; vector-effect: non-scaling-stroke; }
.dots { fill: none; stroke: #c8b8ff; stroke-width: 2; stroke-linecap: round; vector-effect: non-scaling-stroke; }
.dots.cy { stroke: #10d0f0; }
.nan-box { fill: none; stroke: #d6dbe6; stroke-width: 1; vector-effect: non-scaling-stroke; }
.map-labels text { font-size: 10px; fill: #d8d8ea; text-anchor: middle; }
.lg { font-size: 10px; fill: #d8dce6; text-anchor: middle; }
.lg.start { text-anchor: start; dominant-baseline: middle; fill: #b8bdca; }
.hdl { fill: #fff; }
.maptip { position: absolute; left: 435.500px; top: 323px; width: 74px; height: 62px; padding: 3px 0 0 5px; background: rgba(50, 52, 58, .9); border-radius: 3px; font-size: 10px; line-height: 11px; color: #d9dbe0; white-space: nowrap; }

.ov-title { position: absolute; left: 306px; top: 120px; font-size: 14px; line-height: 20px; color: #3f90cc; }
.ov-total { position: absolute; left: 565px; top: 134px; display: flex; align-items: center; gap: 10px; font-size: 20px; line-height: 28px; color: #4596cf; }
.ov-total svg { width: 15px; height: 15px; fill: none; stroke: #4596cf; stroke-width: 1.800; margin-top: 4px; }
.ov-yoy { position: absolute; left: 71px; top: 174px; font-size: 16px; line-height: 22px; color: #3f85ba; }
.ov-pct { position: absolute; left: 67px; top: 205px; font: 24px/32px "Liberation Sans", sans-serif; color: #fff; display: flex; align-items: center; }
.plus { font-weight: 400; color: #e0142c; font-size: 24px; margin-right: 2px; }
.digits { position: absolute; left: 212px; top: 175px; display: flex; gap: 13.600px; }
.d { width: 37px; height: 58px; position: relative; text-align: center; font: 700 30px/56px Roboto, sans-serif; color: #fff; border: 1px solid #24406f;
  background:
    linear-gradient(#00b8ee, #00b8ee) right top / 7px 2px no-repeat, linear-gradient(#00b8ee, #00b8ee) right top / 2px 8px no-repeat,
    linear-gradient(#00b8ee, #00b8ee) left bottom / 7px 2px no-repeat, linear-gradient(#00b8ee, #00b8ee) left bottom / 2px 8px no-repeat; background-origin: border-box; }
.d::after { content: ""; position: absolute; left: 3px; top: 3px; width: 37px; height: 58px; border-right: 1px solid #223a68; border-bottom: 1px solid #223a68; }
.cm { width: 10px; font: 700 24px/66px "Liberation Sans", sans-serif; color: #fff; }
.ov-unit { position: absolute; left: 665px; top: 217px; font-size: 13px; line-height: 18px; color: #3f90cc; }

.ttl { position: absolute; font-size: 14px; line-height: 20px; color: #3f90cc; white-space: nowrap; }
.t1 { left: 739px; top: 25px; }
.t2 { left: 1036px; top: 25px; }
.t3 { left: 735px; top: 277px; }
.t4 { left: 1034px; top: 278px; }
.t5 { left: 1034px; top: 479px; }
.t6 { left: 735px; top: 510px; }

.ring-bg { fill: none; stroke: #2f3a5f; stroke-width: 10; }
.ring-fg { fill: none; stroke: #6b6cec; stroke-width: 10; }
.ring-txt { font-size: 21px; fill: #fff; text-anchor: middle; }
.bl { fill: #3f90cc; }
.s13 { font-size: 13px; } .s14 { font-size: 14px; } .s11 { font-size: 11px; }
.wh { fill: #fff; }
.b18 { font-size: 18px; font-weight: 700; }
.b12 { font-size: 12px; font-weight: 700; }
.thinp { font-weight: 400; }
.red { fill: #e0142c; font-size: 18px; }
.axis { fill: none; stroke: #c7cdd8; stroke-width: 1; }
.axis.dim { stroke: #6b94b2; }
.ax-l { font-size: 10px; fill: #b4bac8; }
.ax-l text { fill: #b4bac8; }
.ax-l.end { text-anchor: end; }
.ax-l.mid { text-anchor: middle; }
.ax-l.lite text, text.ax-l.lite { fill: #dfe2ea; }

.guide-h { position: absolute; left: 0; top: 528px; width: 1037px; border-top: 1px dashed #0a7fd0; }
.guide-v { position: absolute; left: 1037px; top: 0; height: 528px; border-left: 1px dashed #0a8ae0; }
.guide-val { position: absolute; left: 972px; top: 502px; font: 16px/22px Roboto, sans-serif; color: #0a76c8; }
.selected { position: absolute; left: 1037px; top: 528px; width: 271px; height: 189px; background: rgba(10, 130, 210, .2); box-shadow: inset 0 0 0 2px #0a8ef0; }
.line { fill: none; stroke: #00c0e8; stroke-width: 1.500; }
.pts circle, .pt-leg { fill: #00c0e8; }
.pt-l text { font-size: 10px; fill: #00b0d8; text-anchor: middle; }
.sel-tools { position: absolute; left: 1px; top: 2px; display: flex; gap: 5px; }
.st-b { width: 16px; height: 15px; background: #0a8ef0; display: flex; align-items: center; justify-content: center; }
.st-b svg { width: 13px; height: 13px; }
.w3 { fill: none; stroke: #fff; stroke-width: 3; }
.w2 { fill: none; stroke: #fff; stroke-width: 2; }
.w1 { fill: none; stroke: #fff; stroke-width: 1.300; }
.h { position: absolute; background: #0a8ef0; }
.tl, .tr, .bl2, .br { width: 8px; height: 9px; }
.tl { left: -3px; top: -3px; } .tr { right: -3px; top: -3px; } .bl2 { left: -3px; bottom: -3px; } .br { right: -3px; bottom: -3px; }
.tm, .bm { width: 9px; height: 4px; left: 131px; }
.tm { top: -3px; } .bm { bottom: -3px; }
.ml, .mr { width: 4px; height: 10px; top: 90px; }
.ml { left: -3px; } .mr { right: -3px; }

/* right panel */
.props { width: 380px; flex: none; border-left: 3px solid #c9c9c9; background: #fff; position: relative; overflow: hidden; display: flex; flex-direction: column; }
.props-head { height: 61px; flex: none; background: #eff3f4; display: flex; align-items: center; padding: 0 0 0 22px; }
.props-head-text { padding-top: 2px; }
.dbl2 { width: 22px; height: 18px; margin-right: 11px; margin-top: 4px; }
.props-title { font-size: 14px; line-height: 20px; color: #333; }
.props-link { font-size: 12px; line-height: 18px; margin-top: 4px; color: #0a72e8; display: flex; align-items: center; }
.props-link svg { width: 12px; height: 12px; fill: none; stroke: #0a72e8; stroke-width: 1.100; }
.props-search { height: 27px; flex: none; background: #fff; border: 1px solid #e9e9e9; border-radius: 3px; padding-left: 13px; line-height: 25px; color: #bbb; }
.tabs { height: 44px; flex: none; background: #f5f6f8; display: flex; align-items: flex-end; gap: 10px; padding-left: 8px; }
.tab { width: 47px; height: 38px; text-align: center; line-height: 38px; border-radius: 3px 3px 0 0; color: #333; }
.tab.on { background: #fff; }
.form { padding: 0 17px 0 12px; margin-top: -3px; position: relative; }
.f-label { height: 18px; line-height: 18px; color: #666; display: block; margin-bottom: 8px; }
.row .f-label { margin-bottom: 0; }
.f-label.dark { color: #444; }
.gap { margin-top: 16px; }
.sel { height: 32px; border: 1px solid #e3e3e3; border-radius: 4px; background: #fff; display: flex; align-items: center; padding: 0 11px; color: #333; }
.sel span { flex: 1; }
.sel.ph { color: #bbb; }
.caret { width: 11px; height: 7px; fill: none; stroke: #888; stroke-width: 1.100; }
.row { display: flex; align-items: center; justify-content: space-between; height: 20px; }
.r22 { margin-top: 22px; }
.r23 { margin-top: 23px; }
.r15 { margin-top: 15px; }
.r13 { margin-top: 13px; }
.mb9 { margin-bottom: 9px; }
.sw { width: 44px; height: 20px; border-radius: 10px; background: #d0d2d6; position: relative; }
.sw::after { content: ""; position: absolute; left: 2px; top: 2px; width: 16px; height: 16px; border-radius: 50%; background: #fff; }
.sw.on { background: #0070e8; }
.sw.on::after { left: 26px; }
.know { color: #2a90f0; font-size: 12px; margin-right: 6px; }
.y-title { margin-top: 14px; }
.y-icons { display: flex; align-items: center; gap: 16px; padding-right: 8px; }
.y-icons svg { width: 14px; height: 16px; }
.g-fill { fill: #9a9a9a; }
.g-st { fill: none; stroke: #9a9a9a; stroke-width: 1.400; }
.g-w { stroke: #fff; stroke-width: 1; }
.ytable { margin-top: 5px; display: grid; grid-template-columns: 150px 120px 78px; grid-template-rows: 30px 47px; border-top: 1px solid #e6e6e6; border-left: 1px solid #e6e6e6; overflow: hidden; width: 348px; }
.th { border-right: 1px solid #e6e6e6; border-bottom: 1px solid #e6e6e6; padding-left: 4px; font-weight: 600; line-height: 29px; color: #333; }
.td { border-right: 1px solid #e6e6e6; border-bottom: 1px solid #e6e6e6; padding: 6px 4px; white-space: nowrap; }
.sel.sm { height: 32px; padding: 0 9px 0 11px; }
.c3 { width: 73px; }
.clr { width: 13px; height: 13px; border-radius: 50%; background: #d6d6d6; color: #fff; font-size: 11px; line-height: 13px; text-align: center; margin-right: 8px; }
.inp { height: 25px; border: 1px solid #e3e3e3; border-radius: 4px; padding-left: 13px; line-height: 21px; color: #c0c0c0; }
.y-scroll { width: 300px; height: 4px; margin-top: 6px; background: #b9b9b9; }
.plus-btn { width: 34px; height: 34px; margin: 6px auto 0; border-radius: 50%; background: #0a70e0; color: #fff; text-align: center; font: 700 22px/33px "Liberation Sans", sans-serif; position: relative; left: -1px; }
.btns { margin-top: 15px; display: flex; justify-content: center; gap: 15px; padding-right: 1px; }
.btn { height: 32px; border-radius: 3px; color: #fff; line-height: 31px; text-align: center; }
.green { width: 50px; background: #00bd33; }
.blue { width: 74px; background: #0a70e8; }
.sep { margin: 15px 0 18px; border: 0; border-top: 1px solid #e6e6e6; }
.num { height: 31px; border: 1px solid #e3e3e3; border-radius: 4px; padding-left: 11px; line-height: 29px; font-size: 13px; color: #333; }
.redbox { position: absolute; border: 3px solid #f5231e; pointer-events: none; }
.box1 { left: 2px; top: 122px; width: 358px; height: 67px; }
.box2 { left: 6px; top: 496px; width: 360px; height: 115px; }
.props-scroll { position: absolute; right: 0; top: 368px; width: 5px; height: 484px; background: #bcbcbc; }
```
